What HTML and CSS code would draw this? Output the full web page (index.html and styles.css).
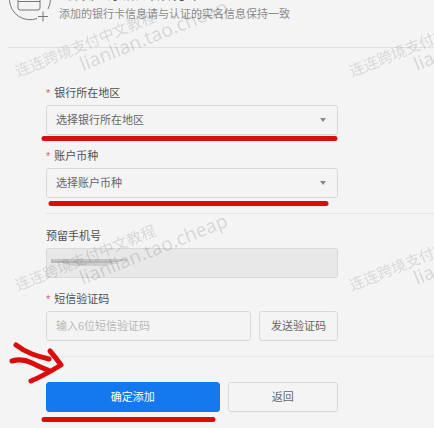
FILE: index.html
```
<!DOCTYPE html>
<html lang="zh-CN">
<head>
	<meta charset="utf-8">
	<title>添加银行卡</title>
	<link rel="stylesheet" href="styles.css">
</head>
<body>
	<div class="page">
		<div class="header">
			<svg class="card-icon" width="44" height="44" viewBox="0 0 44 44" fill="none" stroke="#777" stroke-width="1">
				<path d="M29 40.500A20.500 20.500 0 1 1 40 31"/>
				<rect x="10" y="11" width="22" height="21" rx="2"/>
				<path d="M10 23.500h22M35 33.500v10M30 38.500h10"/>
			</svg>
			<div class="intro">
				<h1>为账户添加新银行卡</h1>
				<p>添加的银行卡信息请与认证的实名信息保持一致</p>
			</div>
		</div>
		<form class="form">
			<div class="group">
				<label class="required" for="area">银行所在地区</label>
				<div class="select">
					<select id="area"><option>选择银行所在地区</option></select>
				</div>
				<label class="required" for="currency">账户币种</label>
				<div class="select">
					<select id="currency"><option>选择账户币种</option></select>
				</div>
			</div>
			<div class="group">
				<label for="phone">预留手机号</label>
				<div class="phone">
					<input id="phone" type="text" disabled>
					<svg class="smudge" width="78" height="12" viewBox="0 0 78 12">
						<path d="M0 2h76v2H0z" fill="#c4c4c4"/>
						<path d="M0 4h74l-16 2H0z" fill="#b8b8b8"/>
						<path d="M12 6h58l-20 3H22z" fill="#cecece"/>
					</svg>
				</div>
				<label class="required" for="code">短信验证码</label>
				<div class="code">
					<input id="code" type="text" placeholder="输入6位短信验证码">
					<button class="btn" type="button">发送验证码</button>
				</div>
			</div>
			<div class="actions">
				<button class="btn primary" type="button">确定添加</button>
				<button class="btn back" type="button">返回</button>
			</div>
		</form>

		<svg class="overlay" width="434" height="428" viewBox="0 0 434 428">
			<defs>
				<g id="mark">
					<text class="mark-cn" transform="translate(18 77) rotate(-22)">连连跨境支付中文教程</text>
					<text class="mark-en" transform="translate(83 71) rotate(-22)">lianlian.tao.cheap</text>
				</g>
			</defs>
			<g class="marks">
				<use href="#mark"/>
				<use href="#mark" x="334"/>
				<use href="#mark" y="214"/>
				<use href="#mark" x="334" y="214"/>
			</g>
			<g class="pen">
				<path d="M44 138.500H335"/>
				<path d="M51 203.500H326"/>
				<path d="M44 419.500H213"/>
				<path d="M16 345Q24 351 32 354T49 359"/>
				<path d="M12 361Q22 358 32 363T48 370"/>
				<path d="M50 351Q56 358 61 365Q45 375 31 381"/>
			</g>
		</svg>
	</div>
</body>
</html>
```
FILE: styles.css
```
* {
	box-sizing: border-box;
	margin: 0;
	padding: 0;
}
body {
	background-color: #f4f4f4;
	color: #505050;
	font-family: "Liberation Sans", "Noto Sans CJK SC", sans-serif;
	font-size: 11px;
	line-height: 16px;
}
.page {
	position: relative;
	overflow: hidden;
}
.header {
	display: flex;
	align-items: flex-end;
	gap: 7px;
	height: 48px;
	margin-left: 8px;
	padding-bottom: 25px;
	border-bottom: 1px solid #e2e2e2;
}
.card-icon {
	flex: none;
}
.intro h1 {
	font-size: 16px;
	font-weight: normal;
	line-height: 24px;
}
.intro p {
	color: #8c8c8c;
	white-space: nowrap;
}
.form {
	margin-left: 46px;
}
.group {
	padding: 14px 96px 15px 0;
	border-bottom: 1px solid #e6e6e6;
}
.group:first-child {
	padding-top: 37px;
}
label {
	display: block;
	margin-bottom: 4px;
}
.required::before {
	content: "*";
	color: #e0605f;
	margin-right: 4px;
}
.select {
	position: relative;
}
.select + label,
.phone + label {
	margin-top: 13px;
}
.select::after {
	content: "";
	position: absolute;
	top: 13px;
	right: 12px;
	border: 3px solid transparent;
	border-top: 4px solid #888;
	pointer-events: none;
}
select,
input,
.btn {
	display: block;
	width: 100%;
	height: 30px;
	border: 1px solid #d6d8d9;
	border-radius: 3px;
	background-color: #f4f4f4;
	color: #666;
	font: inherit;
}
select,
input {
	padding: 0 9px;
	appearance: none;
}
input::placeholder {
	color: #b8b8b8;
}
input:disabled {
	background-color: #e8e8e8;
	border-color: #d8d8d8;
}
.phone {
	position: relative;
}
.smudge {
	position: absolute;
	top: 9px;
	left: 5px;
}
.code,
.actions {
	display: flex;
	gap: 8px;
}
.code input {
	flex: 1;
	min-width: 0;
}
.code .btn {
	flex: none;
	width: 79px;
}
.actions {
	padding: 25px 96px 16px 0;
}
.actions .primary {
	flex: 174;
	background-color: #1479ee;
	border-color: #1479ee;
	color: #fff;
}
.actions .back {
	flex: 110;
}
.overlay {
	position: absolute;
	top: 0;
	left: 0;
	pointer-events: none;
}
.marks {
	fill: #000;
	opacity: .12;
}
.mark-cn {
	font-size: 15px;
}
.mark-en {
	font-family: "Noto Sans", sans-serif;
	font-size: 19px;
}
.pen {
	fill: none;
	stroke: #da0d0d;
	stroke-width: 5;
	stroke-linecap: round;
	stroke-linejoin: round;
}
```
